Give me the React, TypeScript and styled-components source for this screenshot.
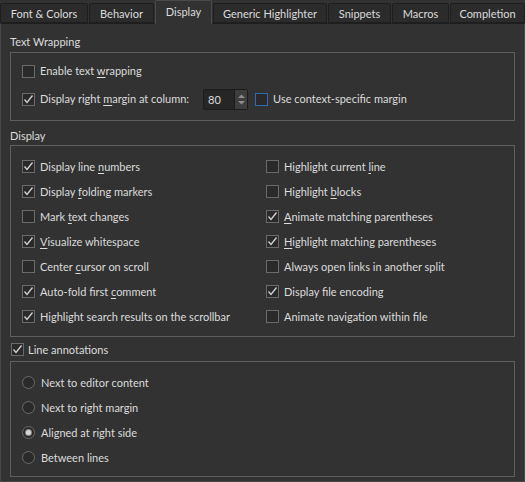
import React from "react";
import styled, { createGlobalStyle } from "styled-components";

const Global = createGlobalStyle`
  html, body { margin: 0; padding: 0; background: #323232; }
  * { box-sizing: border-box; }
`;

const Root = styled.div`
  width: 525px;
  height: 482px;
  background: #323232;
  color: #dcdcdc;
  font-family: Lato, "Liberation Sans", sans-serif;
  font-size: 11px;
  display: flex;
  flex-direction: column;
  overflow: hidden;
`;

const TabBar = styled.div`
  height: 23px;
  display: flex;
  align-items: flex-end;
  gap: 1px;
  position: relative;
  z-index: 1;
`;

const Tab = styled.div<{ $w: number; $active?: boolean }>`
  width: ${(p) => p.$w}px;
  height: ${(p) => (p.$active ? 24 : 20)}px;
  margin-bottom: ${(p) => (p.$active ? -1 : 0)}px;
  display: flex;
  align-items: center;
  justify-content: center;
  padding-bottom: ${(p) => (p.$active ? 2 : 0)}px;
  background: ${(p) => (p.$active ? "#323232" : "#2b2b2b")};
  border: 1px solid ${(p) => (p.$active ? "#4a4a4a" : "#1e1e1e")};
  border-bottom: ${(p) => (p.$active ? "none" : "1px solid #1e1e1e")};
  border-radius: 2px 2px 0 0;
  color: #dcdcdc;
  white-space: nowrap;
`;

const Panel = styled.div`
  flex: 1;
  border: 1px solid #474747;
  border-top-color: #1e1e1e;
  padding: 0 9px 4px 9px;
  display: flex;
  flex-direction: column;
`;

const SectionTitle = styled.div<{ $top: number; $mb: number }>`
  padding-top: ${(p) => p.$top}px;
  line-height: 16px;
  height: ${(p) => p.$top + 16}px;
  margin-bottom: ${(p) => p.$mb}px;
`;

const Group = styled.div<{ $pt: number; $pb: number }>`
  border: 1px solid #5f5f5f;
  padding: ${(p) => p.$pt}px 11px ${(p) => p.$pb}px 11px;
  display: flex;
  flex-direction: column;
`;

const Grid = styled.div`
  display: grid;
  grid-template-columns: 244px 1fr;
`;

const Row = styled.div<{ $h: number }>`
  height: ${(p) => p.$h}px;
  display: flex;
  align-items: center;
  white-space: nowrap;
`;

const Check = styled.label<{ $gap?: number }>`
  display: inline-flex;
  align-items: center;
  gap: ${(p) => p.$gap ?? 5}px;
  line-height: 14px;
`;

const Box = styled.span<{ $focus?: boolean }>`
  width: 13px;
  height: 13px;
  flex: none;
  border: 1px solid ${(p) => (p.$focus ? "#2d6cb5" : "#6b6b6b")};
  background: #2a2a2a;
  display: flex;
  align-items: center;
  justify-content: center;
`;

const RadioCircle = styled.span`
  width: 13px;
  height: 13px;
  flex: none;
  border-radius: 50%;
  border: 1px solid #6b6b6b;
  background: #2a2a2a;
  display: flex;
  align-items: center;
  justify-content: center;
`;

const Dot = styled.span`
  width: 5px;
  height: 5px;
  border-radius: 50%;
  background: #d6d6d6;
  box-shadow: 0 0 0 1px #8a8a8a;
`;

const Mn = styled.span`
  text-decoration: underline;
  text-underline-offset: 2px;
  text-decoration-thickness: 1px;
`;

const Spin = styled.div`
  width: 45px;
  height: 21px;
  margin-left: 14px;
  margin-right: 7px;
  border: 1px solid #1c1c1c;
  border-radius: 2px;
  background: #262626;
  display: flex;
`;

const SpinValue = styled.div`
  flex: 1;
  display: flex;
  align-items: center;
  padding-left: 4px;
`;

const SpinArrows = styled.div`
  width: 13px;
  background: #3e3e3e;
  border-left: 1px solid #1c1c1c;
  display: flex;
  align-items: center;
  justify-content: center;
`;

const LineAnno = styled.div`
  height: 24px;
  display: flex;
  align-items: center;
  padding-left: 1px;
  padding-top: 1px;
`;

const Tick = () => (
  <svg width="11" height="11" viewBox="0 0 11 11">
    <path d="M1.5 5.5 L4 8.5 L9.5 1.5" fill="none" stroke="#d4d4d4" strokeWidth="1.3" />
  </svg>
);

const CheckItem: React.FC<{ checked?: boolean; focus?: boolean; gap?: number; children: React.ReactNode }> = ({
  checked,
  focus,
  gap,
  children,
}) => (
  <Check $gap={gap}>
    <Box $focus={focus}>{checked && <Tick />}</Box>
    <span>{children}</span>
  </Check>
);

const RadioItem: React.FC<{ checked?: boolean; children: React.ReactNode }> = ({ checked, children }) => (
  <Row $h={25}>
    <Check $gap={6}>
      <RadioCircle>{checked && <Dot />}</RadioCircle>
      <span>{children}</span>
    </Check>
  </Row>
);

const tabs: [string, number][] = [
  ["Font & Colors", 88],
  ["Behavior", 65],
  ["Display", 57],
  ["Generic Highlighter", 114],
  ["Snippets", 63],
  ["Macros", 57],
  ["Completion", 75],
];

type Item = { c: boolean; node: React.ReactNode };

const left: Item[] = [
  { c: true, node: <>Display line <Mn>n</Mn>umbers</> },
  { c: true, node: <>Display <Mn>f</Mn>olding markers</> },
  { c: false, node: <>Mark <Mn>t</Mn>ext changes</> },
  { c: true, node: <><Mn>V</Mn>isualize whitespace</> },
  { c: false, node: <>Center <Mn>c</Mn>ursor on scroll</> },
  { c: true, node: <>Auto-fold first <Mn>c</Mn>omment</> },
  { c: true, node: <>Highlight search results on the scrollbar</> },
];

const right: Item[] = [
  { c: false, node: <>Highlight current <Mn>l</Mn>ine</> },
  { c: false, node: <>Highlight <Mn>b</Mn>locks</> },
  { c: true, node: <><Mn>A</Mn>nimate matching parentheses</> },
  { c: true, node: <><Mn>H</Mn>ighlight matching parentheses</> },
  { c: false, node: <>Always open links in another split</> },
  { c: true, node: <>Display file encoding</> },
  { c: false, node: <>Animate navigation within file</> },
];

export default function App() {
  const cells: React.ReactNode[] = [];
  left.forEach((l, i) => {
    cells.push(
      <Row $h={25} key={"l" + i}>
        <CheckItem checked={l.c}>{l.node}</CheckItem>
      </Row>
    );
    cells.push(
      <Row $h={25} key={"r" + i}>
        <CheckItem checked={right[i].c}>{right[i].node}</CheckItem>
      </Row>
    );
  });

  return (
    <>
      <Global />
      <Root>
        <TabBar>
          {tabs.map(([t, w]) => (
            <Tab key={t} $w={w} $active={t === "Display"}>
              {t}
            </Tab>
          ))}
        </TabBar>
        <Panel>
          <SectionTitle $top={10} $mb={2}>Text Wrapping</SectionTitle>
          <Group $pt={4} $pb={7}>
            <Row $h={28}>
              <CheckItem>
                Enable text <Mn>w</Mn>rapping
              </CheckItem>
            </Row>
            <Row $h={28}>
              <CheckItem checked>
                Display right <Mn>m</Mn>argin at column:
              </CheckItem>
              <Spin>
                <SpinValue>80</SpinValue>
                <SpinArrows>
                  <svg width="9" height="13" viewBox="0 0 9 13">
                    <path d="M1 5 L4.5 1.5 L8 5 Z" fill="#8c8c8c" />
                    <path d="M1 8 L4.5 11.5 L8 8 Z" fill="#8c8c8c" />
                  </svg>
                </SpinArrows>
              </Spin>
              <CheckItem focus>Use context-specific margin</CheckItem>
            </Row>
          </Group>
          <SectionTitle $top={7} $mb={1}>Display</SectionTitle>
          <Group $pt={8} $pb={7}>
            <Grid>{cells}</Grid>
          </Group>
          <LineAnno>
            <CheckItem checked gap={4}>
              Line annotations
            </CheckItem>
          </LineAnno>
          <Group $pt={8} $pb={6}>
            <RadioItem>Next to editor content</RadioItem>
            <RadioItem>Next to right margin</RadioItem>
            <RadioItem checked>Aligned at right side</RadioItem>
            <RadioItem>Between lines</RadioItem>
          </Group>
        </Panel>
      </Root>
    </>
  );
}
